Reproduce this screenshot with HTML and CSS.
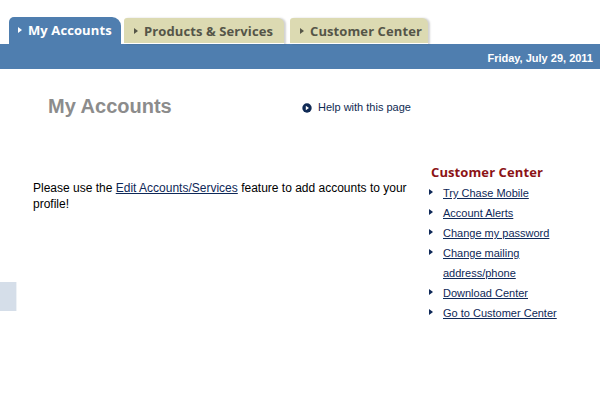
FILE: index.html
```html
<!DOCTYPE html>
<html>
<head>
<meta charset="utf-8">
<link rel="stylesheet" href="styles.css">
</head>
<body>
<header class="header">
  <nav class="tabs">
    <a class="tab tab-active"><span class="tab-arrow"></span>My Accounts</a>
    <a class="tab tab-plain tab-products"><span class="tab-arrow"></span>Products &amp; Services</a>
    <a class="tab tab-plain tab-center"><span class="tab-arrow"></span>Customer Center</a>
  </nav>
  <div class="bar"><span class="date">Friday, July 29, 2011</span></div>
</header>
<main class="page">
  <div class="top-row">
    <h1 class="title">My Accounts</h1>
    <a class="help"><svg class="help-icon" width="10" height="10" viewBox="0 0 10 10"><circle cx="5" cy="5" r="4.7" fill="#0f2a55"/><path d="M3.8 2.8 L7 5 L3.8 7.2 Z" fill="#fff"/></svg>Help with this page</a>
  </div>
  <div class="content">
    <div class="stub-col"><div class="stub"></div></div>
    <p class="intro">Please use the <a class="link">Edit Accounts/Services</a> feature to add accounts to your profile!</p>
    <aside class="side">
      <h2 class="side-title">Customer Center</h2>
      <ul class="side-list">
        <li><a class="link">Try Chase Mobile</a></li>
        <li><a class="link">Account Alerts</a></li>
        <li><a class="link">Change my password</a></li>
        <li><a class="link">Change mailing address/phone</a></li>
        <li><a class="link">Download Center</a></li>
        <li><a class="link">Go to Customer Center</a></li>
      </ul>
    </aside>
  </div>
</main>
</body>
</html>
```
FILE: styles.css
```css
html, body {
  margin: 0;
  padding: 0;
  background: #fff;
  width: 600px;
  height: 420px;
  overflow: hidden;
  font-family: "Liberation Sans", Arial, sans-serif;
}

.header {
  padding-top: 16px;
}

.tabs {
  display: flex;
  align-items: flex-end;
  padding-left: 9px;
  height: 28px;
}

.tab {
  display: flex;
  align-items: center;
  box-sizing: border-box;
  font-family: "Open Sans", sans-serif;
  font-weight: 700;
  font-size: 13px;
  letter-spacing: 0.1px;
  white-space: nowrap;
}

.tab-active {
  width: 112px;
  height: 27px;
  background: #4f7eaf;
  color: #fff;
  border-radius: 5px 9px 0 0;
  padding-left: 9px;
  padding-bottom: 2px;
}

.tab-plain {
  height: 26px;
  background: #dcdab2;
  color: #555548;
  border-radius: 3px 6px 0 0;
  border-bottom: 1px solid #fff;
  padding-left: 10px;
  box-shadow: 2px 0 2px rgba(0, 0, 0, 0.18);
}

.tab-products {
  width: 160px;
  margin-left: 3px;
}

.tab-center {
  width: 138px;
  margin-left: 6px;
}

.tab-arrow {
  width: 0;
  height: 0;
  border-top: 3.5px solid transparent;
  border-bottom: 3.5px solid transparent;
  border-left: 4px solid currentColor;
  margin-right: 6px;
}

.bar {
  height: 25px;
  background: #4f7eaf;
  display: flex;
  align-items: center;
  justify-content: flex-end;
  padding-right: 7px;
}

.date {
  color: #fff;
  font-weight: 700;
  font-size: 11px;
  padding-top: 2px;
}

.page {
  display: flex;
  flex-direction: column;
}

.top-row {
  display: flex;
  align-items: baseline;
  margin-top: 25px;
  padding-left: 48px;
}

.title {
  margin: 0;
  width: 254px;
  font-size: 20px;
  line-height: 24px;
  font-weight: 700;
  color: #8c8c8c;
}

.help {
  display: flex;
  align-items: center;
  gap: 6px;
  font-size: 11px;
  color: #0f2a52;
}

.help-icon {
  display: block;
  margin-top: 2px;
}

.content {
  display: grid;
  grid-template-columns: 17px 412px 1fr;
  margin-top: 45px;
}

.stub {
  width: 17px;
  height: 29px;
  margin-top: 119px;
  background: #d5dee9;
  border-right: 1px solid #eef2f6;
  box-sizing: border-box;
}

.intro {
  margin: 17px 0 0 16px;
  padding-right: 16px;
  font-size: 12px;
  line-height: 16px;
  color: #000;
}

.link {
  color: #0e2858;
  text-decoration: underline;
}

.side-title {
  margin: 0 0 2px 2px;
  font-family: "Open Sans", sans-serif;
  font-weight: 700;
  font-size: 13px;
  letter-spacing: 0.1px;
  line-height: 18px;
  color: #8b1316;
}

.side-list {
  list-style: none;
  margin: 0;
  padding: 0;
  width: 140px;
}

.side-list li {
  position: relative;
  padding-left: 14px;
  font-size: 11px;
  line-height: 20px;
}

.side-list li::before {
  content: "";
  position: absolute;
  left: 0;
  top: 6px;
  width: 0;
  height: 0;
  border-top: 3.5px solid transparent;
  border-bottom: 3.5px solid transparent;
  border-left: 4px solid #0e2858;
}
```
